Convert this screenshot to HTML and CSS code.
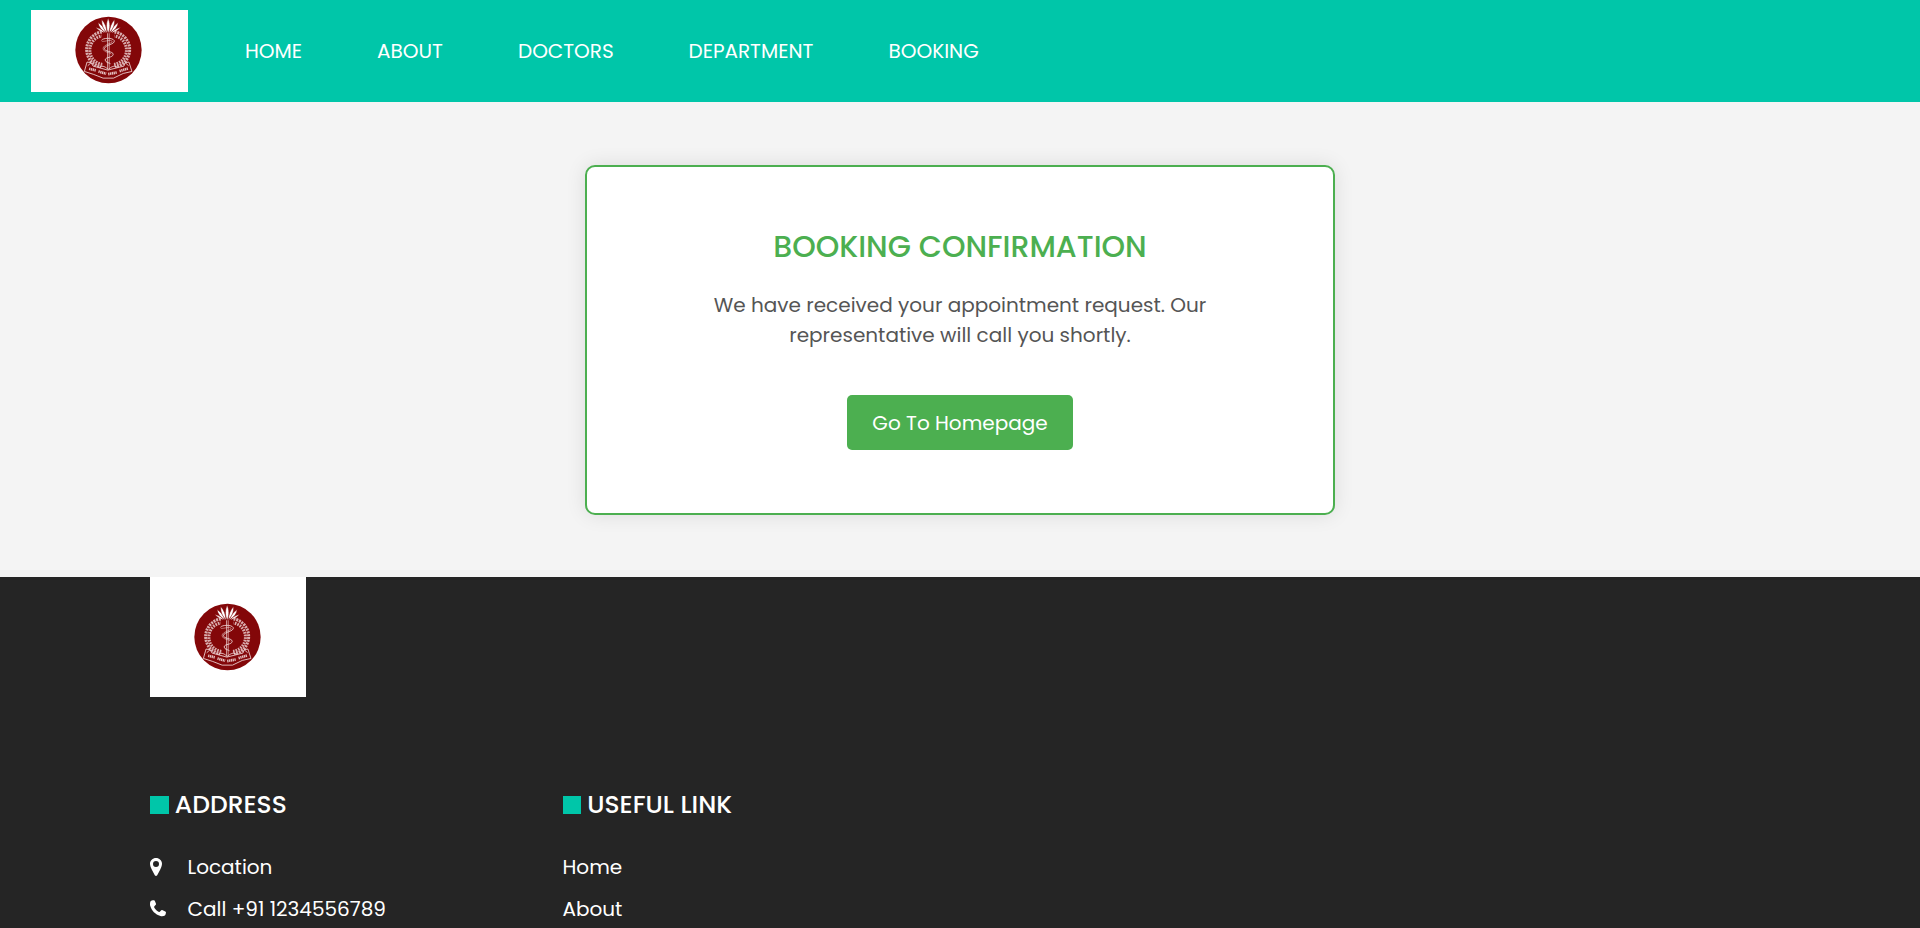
FILE: index.html
```html
<!DOCTYPE html>
<html lang="en">
<head>
<meta charset="utf-8">
<title>Booking Confirmation</title>
<link rel="stylesheet" href="styles.css">
</head>
<body>
<svg class="defs" width="0" height="0" aria-hidden="true">
  <symbol id="emblem" viewBox="0 0 200 200">
    <circle cx="100" cy="100" r="99" fill="#830709"/>
    <g fill="#fff" stroke="#830709" stroke-width="1.5">
      <path d="M90 49C79 47 69 41 62 33C74 36 84 40 90 49ZM108 49C119 47 129 41 136 33C124 36 114 40 108 49Z"/>
      <path d="M93 49C79 41 71 32 69 18C81 26 88 36 93 49ZM105 49C119 41 127 32 129 18C117 26 110 36 105 49Z"/>
      <path d="M96 49C84 37 79 25 80 9C90 20 94 33 96 49ZM102 49C114 37 119 25 118 9C108 20 104 33 102 49Z"/>
      <path d="M99 50C92 34 93 18 99 5C105 18 106 34 99 50Z"/>
    </g>
    <g fill="none" stroke="#f3dede">
      <g stroke-width="9" opacity=".78">
        <path d="M80 46A53.3 53.3 0 0 0 78 151" stroke-dasharray="6 2.5"/>
        <path d="M118 46A53.3 53.3 0 0 1 120 151" stroke-dasharray="6 2.5"/>
        <path d="M80 58A43 43 0 0 0 82 143" stroke-dasharray="5 3" stroke-dashoffset="4"/>
        <path d="M118 58A43 43 0 0 1 116 143" stroke-dasharray="5 3" stroke-dashoffset="4"/>
      </g>
      <path d="M97 50V158M102 50V158" stroke-width="2"/>
      <path d="M79 71C83 64 112 62 117 72C121 83 90 85 88 95C87 106 114 103 114 113C113 124 90 120 90 130C91 138 103 138 106 141" stroke-width="2.5"/>
      <path d="M80 74C91 76 105 67 111 74C113 80 84 84 84 95C84 109 108 106 108 113" stroke-width="1.5"/>
    </g>
    <path fill="#830709" stroke="#f3dede" stroke-width="2.5" d="M36 136L48 138L54 148L98 160L146 148L150 138L161 136L170 164L144 170L115 184H84L56 173L28 164L36 136Z"/>
    <g fill="none" stroke="#f3dede">
      <path d="M48 138L38 147M150 138L160 147M72 152C84 144 92 152 99 158C107 152 115 144 127 152" stroke-width="2.5"/>
      <path d="M42 156L63 161M70 164L93 171M99 172L125 167M133 163L159 155" stroke-width="8" stroke-dasharray="4 1.5" opacity=".85"/>
    </g>
  </symbol>
</svg>

<header class="navbar">
  <a class="navbar-logo" href="#"><svg class="emblem"><use href="#emblem"/></svg></a>
  <nav class="menu">
    <a href="#">HOME</a>
    <a href="#">ABOUT</a>
    <a href="#">DOCTORS</a>
    <a href="#">DEPARTMENT</a>
    <a href="#">BOOKING</a>
  </nav>
</header>

<main class="confirmation">
  <section class="card">
    <h1>BOOKING CONFIRMATION</h1>
    <p>We have received your appointment request. Our<br>representative will call you shortly.</p>
    <a class="button" href="#">Go To Homepage</a>
  </section>
</main>

<footer class="footer">
  <a class="footer-logo" href="#"><svg class="emblem"><use href="#emblem"/></svg></a>
  <div class="columns">
    <section>
      <h2><i class="square"></i>ADDRESS</h2>
      <ul>
        <li><svg class="icon" viewBox="0 0 20 20"><path fill="#fff" fill-rule="evenodd" d="M6 1C2.7 1 0 3.5 0 6.8C0 9 1.1 11 2 12.9L4.8 18.3Q6 19.9 7.2 18.3L10 12.9C10.9 11 12 9 12 6.8C12 3.5 9.3 1 6 1ZM6 4A3 3 0 1 1 6 10A3 3 0 0 1 6 4Z"/></svg>Location</li>
        <li><svg class="icon" viewBox="0 0 20 20"><path fill="#fff" d="M.6 2.2C1.5 1.5 3.2 1 4.2 1.3C4.8 1.8 5.7 3.8 6.1 4.9C6.3 6.1 4.1 7 4.1 7.9C4.6 9.6 7.5 12.5 9.2 13C10.1 13 11.1 10.8 12.2 11.1C13.3 11.5 15.4 12.5 15.9 13C16.1 14 15.5 15.8 14.9 16.5C13.8 17.2 11.8 17.4 10.4 17C5.3 15.5 1.6 11.7.2 6.8C-.2 5.2 0 3.3.6 2.2Z"/></svg>Call +91 1234556789</li>
      </ul>
    </section>
    <section>
      <h2><i class="square"></i>USEFUL LINK</h2>
      <ul>
        <li><a href="#">Home</a></li>
        <li><a href="#">About</a></li>
      </ul>
    </section>
  </div>
</footer>
</body>
</html>
```
FILE: styles.css
```css
* { box-sizing: border-box; margin: 0; padding: 0; }
body {
  height: 928px;
  overflow: hidden;
  background: #f4f4f4;
  font-family: Poppins, Inter, "Liberation Sans", sans-serif;
  font-size: 20px;
  color: #fff;
}
a { color: inherit; text-decoration: none; }
ul { list-style: none; }
.defs { display: block; }
.emblem { width: 67px; height: 68px; display: block; }

.navbar {
  display: flex;
  align-items: center;
  height: 102px;
  padding-left: 31px;
  background: #00c6a9;
}
.navbar-logo {
  display: flex;
  justify-content: center;
  width: 157px;
  height: 82px;
  padding-top: 6px;
  padding-right: 2px;
  background: #fff;
}
.menu {
  display: grid;
  grid-template-columns: 132px 141px 170.5px 200px 120px;
  margin-left: 57px;
  line-height: 30px;
}

.confirmation { height: 475px; padding-top: 63px; }
.card {
  width: 750px;
  height: 350px;
  margin: 0 auto;
  padding-top: 57px;
  background: #fff;
  border: 2px solid #4caf50;
  border-radius: 10px;
  box-shadow: 0 0 20px rgba(0, 0, 0, .1);
  text-align: center;
}
.card h1 { font-size: 30px; font-weight: 500; line-height: 46px; color: #4caf50; }
.card p { margin-top: 20px; line-height: 30px; color: #555; }
.button {
  display: flex;
  align-items: center;
  justify-content: center;
  width: 226px;
  height: 55px;
  margin: 45px auto 0;
  border-radius: 5px;
  background: #4caf50;
}

.footer { height: 351px; padding-left: 150px; background: #252525; }
.footer-logo {
  display: flex;
  align-items: center;
  justify-content: center;
  width: 156px;
  height: 120px;
  padding-right: 1px;
  padding-bottom: 1px;
  background: #fff;
}
.columns { display: grid; grid-template-columns: 412.5px 400px; margin-top: 88px; }
.footer h2 {
  display: flex;
  align-items: center;
  gap: 6px;
  height: 39px;
  font-size: 25px;
  font-weight: 500;
}
.square { width: 18.75px; height: 18.75px; margin-top: 1px; background: #00c6a9; }
.footer ul { margin-top: 22px; }
.footer li { display: flex; align-items: center; height: 42px; }
.icon { width: 20px; height: 20px; margin-right: 17.5px; }
```
